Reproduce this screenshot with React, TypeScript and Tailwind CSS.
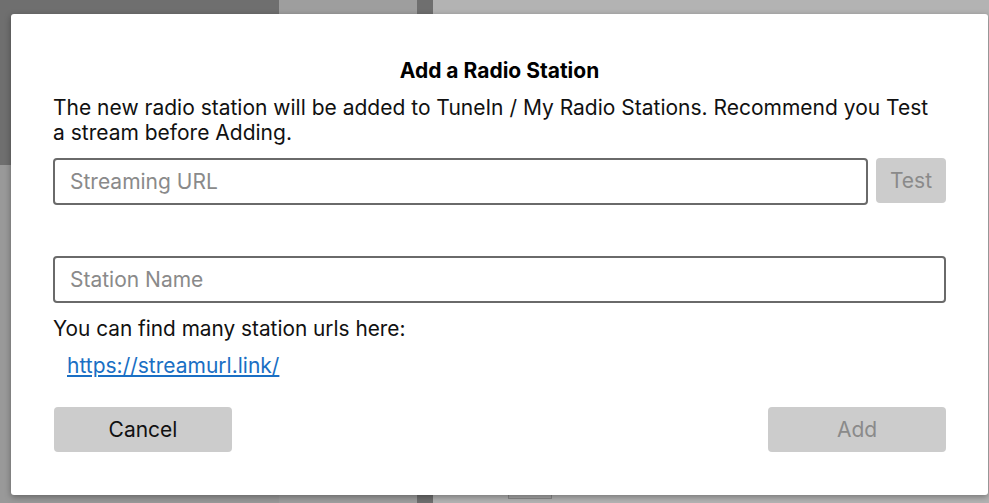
export default function App() {
  return (
    <div
      className="relative h-[503px] w-[989px] overflow-hidden bg-[#b3b3b3]"
      style={{ fontFamily: "Inter, 'Noto Sans', sans-serif" }}
    >
      {/* backdrop panels */}
      <div className="absolute left-0 top-0 h-[165px] w-[279px] bg-[#6f6f6f]" />
      <div className="absolute left-0 top-[165px] h-[338px] w-[279px] bg-[#999999]" />
      <div className="absolute left-[279px] top-0 h-[503px] w-[138px] bg-[#9e9e9e]" />
      <div className="absolute left-[417px] top-0 h-[503px] w-[16px] bg-[#6f6f6f]" />
      <div className="absolute left-[508px] top-[494px] h-[5px] w-[44px] border border-[#8a8a8a] bg-[#a8a8a8]" />

      {/* dialog */}
      <div className="absolute left-[11px] top-[14px] flex h-[481px] w-[977px] flex-col rounded-[3px] bg-white px-[42px] pt-[45px] shadow-[0_2px_6px_rgba(0,0,0,0.35)]">
        <h2 className="text-center text-[21px] font-bold leading-[24px] text-black">
          Add a Radio Station
        </h2>
        <p className="mt-[12px] w-[885px] text-[21px] leading-[25px] text-[#111]">
          The new radio station will be added to TuneIn / My Radio Stations. Recommend you Test a
          stream before Adding.
        </p>

        <div className="mt-[13px] flex gap-[8px]">
          <input
            placeholder="Streaming URL"
            className="h-[47px] flex-1 rounded-[4px] border-2 border-[#6a6a6a] px-[15px] text-[21px] text-black outline-none placeholder:text-[#8a8a8a]"
          />
          <button className="h-[45px] w-[70px] rounded-[4px] bg-[#cccccc] text-[21px] text-[#8a8a8a]">
            Test
          </button>
        </div>

        <input
          placeholder="Station Name"
          className="mt-[51px] h-[47px] w-full rounded-[4px] border-2 border-[#6a6a6a] px-[15px] text-[21px] text-black outline-none placeholder:text-[#8a8a8a]"
        />

        <p className="mt-[13px] text-[20.8px] leading-[25px] text-[#111]">
          You can find many station urls here:
        </p>
        <a
          href="#"
          className="ml-[14px] mt-[12px] self-start text-[21px] leading-[25px] text-[#1a6fc4] underline"
        >
          https://streamurl.link/
        </a>

        <div className="mt-[29px] flex justify-between">
          <button className="ml-[1px] h-[45px] w-[178px] rounded-[4px] bg-[#cccccc] text-[21px] text-[#111]">
            Cancel
          </button>
          <button className="h-[45px] w-[178px] rounded-[4px] bg-[#cccccc] text-[21px] text-[#8a8a8a]">
            Add
          </button>
        </div>
      </div>
    </div>
  );
}
